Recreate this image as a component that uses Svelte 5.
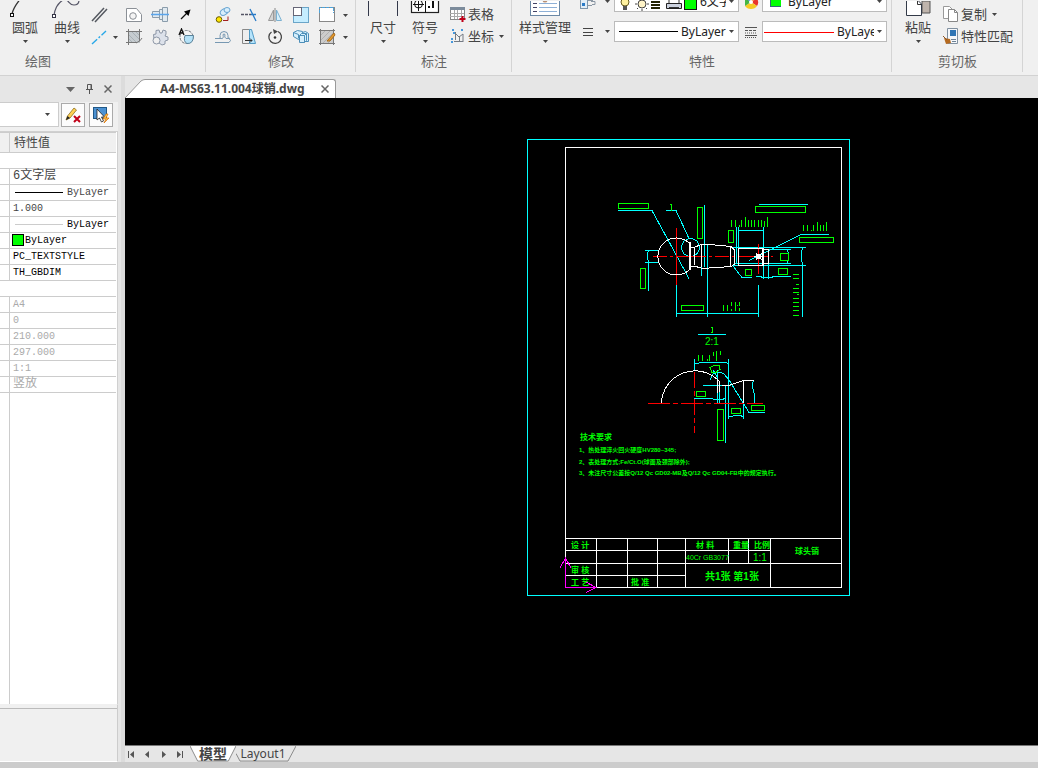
<script lang="ts">
    type Row = { value: string; kind?: 'blank' | 'line' | 'hairline' | 'color' | 'cjk'; tone?: 'strong' | 'muted' };

    const rows: Row[] = [
        { value: '', kind: 'blank' },
        { value: '6文字层', kind: 'cjk' },
        { value: 'ByLayer', kind: 'line' },
        { value: '1.000' },
        { value: 'ByLayer', kind: 'hairline', tone: 'strong' },
        { value: 'ByLayer', kind: 'color', tone: 'strong' },
        { value: 'PC_TEXTSTYLE', tone: 'strong' },
        { value: 'TH_GBDIM', tone: 'strong' },
        { value: '', kind: 'blank' },
        { value: 'A4', tone: 'muted' },
        { value: '0', tone: 'muted' },
        { value: '210.000', tone: 'muted' },
        { value: '297.000', tone: 'muted' },
        { value: '1:1', tone: 'muted' },
        { value: '竖放', kind: 'cjk', tone: 'muted' }
    ];

    // x, y, width, height of the dimension text frames
    const textBoxes = [
        [618, 203, 30, 5], [697, 207, 5, 31], [755, 206, 50, 6], [799, 237, 34, 5],
        [728, 230, 5, 12], [780, 253, 8, 7], [778, 268, 9, 6], [745, 269, 6, 6],
        [640, 268, 5, 20], [681, 305, 22, 5], [696, 391, 9, 5], [717, 409, 6, 31],
        [731, 408, 9, 5], [751, 405, 13, 5]
    ];

    // x, top, bottom
    const ticks = [
        [731, 220, 227], [735, 220, 227], [739, 225, 227], [741, 220, 227], [745, 217, 227],
        [748, 220, 227], [751, 220, 227], [754, 220, 227], [758, 220, 227], [761, 220, 227],
        [764, 221, 227], [767, 217, 227],
        [803, 225, 231], [807, 225, 231], [811, 230, 231], [813, 225, 231], [817, 222, 231],
        [820, 225, 231], [823, 225, 231], [826, 222, 231],
        [723, 305, 311], [727, 305, 311], [731, 302, 306], [731, 309, 311], [735, 302, 311],
        [737, 305, 306], [739, 302, 306], [739, 308, 311],
        [698, 355, 361], [702, 355, 361], [707, 359, 361], [709, 355, 361], [713, 352, 356],
        [716, 351, 361], [720, 351, 355]
    ];

    // y, left
    const sideTicks = [
        [274, 793], [278, 793], [284, 796], [288, 793], [292, 793], [294, 797],
        [298, 793], [302, 793], [306, 793], [310, 793], [315, 793]
    ];

    const notes = [
        { x: 579, y: 452, text: '1、热处理淬火回火硬度HV280~345;' },
        { x: 579, y: 464, text: '2、表处理方式;Fe/Ct.O(球面及颈部除外);' },
        { x: 579, y: 475, text: '3、未注尺寸公差按Q/12 Qc GD02-MB及Q/12 Qc GD04-FB中的规定执行。' }
    ];

    const titleBlock = [
        { x: 571, y: 548, text: '设 计' },
        { x: 571, y: 573, text: '审 核' },
        { x: 571, y: 585, text: '工 艺' },
        { x: 631, y: 585, text: '批 准' },
        { x: 696, y: 548, text: '材 料' },
        { x: 733, y: 548, text: '重量' },
        { x: 754, y: 548, text: '比例' }
    ];
</script>

{#snippet caret()}
    <svg class="caret" width="5" height="3" viewBox="0 0 5 3"><path d="M0 0h5L2.5 3z" fill="#444" /></svg>
{/snippet}

<div class="app">
    <div class="ribbon">
        <section class="group draw">
            <div class="body">
                <button class="big">
                    <svg width="36" height="18" viewBox="0 0 36 18">
                        <path d="M5 13C6 8 9 3 15 -4" fill="none" stroke="#333" stroke-width="1.3" />
                        <rect x="3.5" y="12.5" width="3" height="3" fill="#fff" stroke="#111" />
                    </svg>
                    <span>圆弧</span>{@render caret()}
                </button>
                <button class="big">
                    <svg width="36" height="18" viewBox="0 0 36 18">
                        <path d="M5 14C6 8 9 2 14 -1C20 -3 19 4 25 4C28 4 30 2 30 -1" fill="none" stroke="#556" stroke-width="1.2" />
                        <rect x="3.5" y="13.5" width="3" height="3" fill="#fff" stroke="#334" />
                    </svg>
                    <span>曲线</span>{@render caret()}
                </button>
                <div class="tools">
                    <button aria-label="多线"><svg viewBox="0 0 18 18"><path d="M2 15L14 2M5 16L17 3" stroke="#555960" stroke-width="1.5" /></svg></button>
                    <span></span>
                    <button aria-label="面域"><svg viewBox="0 0 18 18"><path d="M1.500 2.500h10l5 6v7h-15z" fill="#fff" stroke="#8b9096" /><circle cx="8" cy="10" r="3.3" fill="#f4f4f4" stroke="#8b9096" /></svg></button>
                    <button aria-label="轴"><svg viewBox="0 0 18 18"><path d="M1.500 5.500h7v-2h3v-2h5v14h-5v-2h-3v-2h-7z" fill="#dfe9f0" stroke="#8a9cab" /><path d="M8.500 5v8M11.500 3v11" stroke="#8a9cab" /><path d="M0 8.500h18" stroke="#5aa5ec" stroke-width="1.500" /></svg></button>
                    <button aria-label="箭头"><svg viewBox="0 0 18 18"><path d="M4 13L10 7" stroke="#111" stroke-width="1.200" /><path d="M13.500 3.500L11.500 10L7 5.500z" fill="#000" /></svg></button>
                    <button aria-label="中心线"><svg viewBox="0 0 18 18"><path d="M2 16L16 3" stroke="#28a8e8" stroke-width="1.400" stroke-dasharray="7 2 2 2" /></svg></button>
                    <button aria-label="更多线" class="drop">{@render caret()}</button>
                    <button aria-label="填充"><svg viewBox="0 0 18 18"><rect x="3" y="3" width="12" height="12" fill="#c6ccd0" /><path d="M3 6l9 9M3 10l5 5M6 3l9 9M10 3l5 5" stroke="#a9b1b6" /><path d="M3.500 1v16M1 3.500h16M14.500 1v12M1 14.500h11" stroke="#777" fill="none" /><path d="M11 15q5-2 6-5" stroke="#777" fill="none" /></svg></button>
                    <button aria-label="零件"><svg viewBox="0 0 18 18"><path d="M2.500 6.500L5 6V2.500L8 2l1 3h2l1-3 3 1v3l-1 2 3 1v3l-3 1v3l-3 1-3-2-5-4z" fill="#dce1ea" stroke="#8d97a7" /><circle cx="5.500" cy="12.500" r="3.500" fill="#f0f0f0" stroke="#8d97a7" /></svg></button>
                    <button aria-label="局部放大"><svg viewBox="0 0 18 18"><circle cx="9.500" cy="9" r="6.500" fill="#f5f5f5" stroke="#70767c" stroke-dasharray="3 1" /><path d="M8 7.500h8.500q0 8.500-6.500 8-4-2-2-8z" fill="#b5e2f8" stroke="#5a8299" /><path d="M2 7L4.500 1L7 7M3 5h3" fill="none" stroke="#111" stroke-width="1.300" /></svg></button>
                </div>
            </div>
            <h2>绘图</h2>
        </section>

        <section class="group modify">
            <div class="body">
                <div class="tools">
                    <button aria-label="复制对象"><svg viewBox="0 0 18 18"><ellipse cx="10" cy="6" rx="4" ry="3" fill="#d9effc" stroke="#68a5d2" transform="rotate(-35 10 6)" /><ellipse cx="13" cy="4" rx="3" ry="2.500" fill="#d9effc" stroke="#68a5d2" /><circle cx="5" cy="13.500" r="2.800" fill="#ffe600" stroke="#6b5c00" /><path d="M9 14.500h5v-4" fill="none" stroke="#a22020" /></svg></button>
                    <button aria-label="修剪"><svg viewBox="0 0 18 18"><path d="M1 8.500h3M5 8.500h3M9 8.500h2" stroke="#556" stroke-width="1.500" /><path d="M10 3L16 15M11 8.500h5" stroke="#2a7cc8" stroke-width="1.300" /></svg></button>
                    <button aria-label="镜像"><svg viewBox="0 0 18 18"><path d="M7.500 4v10.500h-5z" fill="#d5d5d5" stroke="#999" /><path d="M10.500 4v10.500h5z" fill="#d5effc" stroke="#7bb0d0" /><path d="M9 2v14" stroke="#888" /></svg></button>
                    <button aria-label="缩放"><svg viewBox="0 0 18 18"><rect x="1.500" y="1.500" width="15" height="15" fill="#c5edff" stroke="#6ba5c8" /><rect x="1.500" y="1.500" width="8" height="8" fill="#fff" stroke="#667" /></svg></button>
                    <button aria-label="拉伸"><svg viewBox="0 0 18 18"><rect x="1.500" y="1.500" width="15" height="14" fill="#fff" stroke="#888" /><path d="M1.500 7V1.500h14V7" fill="none" stroke="#4ba3dc" stroke-dasharray="3 1" /></svg></button>
                    <button aria-label="更多" class="drop">{@render caret()}</button>
                    <button aria-label="偏移"><svg viewBox="0 0 18 18"><path d="M1 10.500h4q2 0 1-3 0-4 4-4t4 4q-1 3 2 3M1 14.500h14q3-2 0-4h-3q-2-1-1-4-1-1-2 0 1 5-2 4H3" fill="none" stroke="#7798b2" /></svg></button>
                    <button aria-label="拉长"><svg viewBox="0 0 18 18"><path d="M2.500 1.500h7v14h-7z" fill="#eee" stroke="#888" /><path d="M9.500 1.500h2l4 14h-6z" fill="#b6e4fc" stroke="#529bc5" /><path d="M5 12.500h7m-2-2l2 2-2 2" stroke="#333" fill="none" /></svg></button>
                    <button aria-label="旋转"><svg viewBox="0 0 18 18"><path d="M5.500 4A6.300 6.300 0 1 0 12 3.500" fill="none" stroke="#444" stroke-width="1.300" /><path d="M7 1l5 2.500L8 6z" fill="#444" /><circle cx="9" cy="9.500" r="1.300" fill="#333" /></svg></button>
                    <button aria-label="阵列"><svg viewBox="0 0 18 18"><g fill="#d6effc" stroke="#4d8fb9"><path d="M1.500 4.500l4-2 5 1v6l-4 2-5-3z" /><path d="M10.500 4.500l3-1 3 2v8h-4z" /><path d="M7.500 7.500l2-2h5v7l-2 2h-5z" /><path d="M7.500 7.500h5v7M12.500 7.500l2-2M1.500 4.500l5 2v4" fill="none" /></g></svg></button>
                    <button aria-label="编辑填充"><svg viewBox="0 0 18 18"><rect x="3" y="3" width="12" height="12" fill="#ccc" /><path d="M3 7l4-4M3 12l9-9M5 15L15 5M10 15l5-5" stroke="#b0b0b0" /><path d="M2.500 1v16M1 2.500h16M15.500 1v16M1 15.500h16" stroke="#777" /><path d="M9 13L16 5l1 2-5 6z" fill="#e79b2d" stroke="#a76b1b" /></svg></button>
                    <button aria-label="更多编辑" class="drop">{@render caret()}</button>
                </div>
            </div>
            <h2>修改</h2>
        </section>

        <section class="group dims">
            <div class="body">
                <button class="big">
                    <svg width="36" height="18" viewBox="0 0 36 18"><path d="M3.500 0v15M32.500 0v15" stroke="#33384a" /></svg>
                    <span>尺寸</span>{@render caret()}
                </button>
                <button class="big">
                    <svg width="36" height="18" viewBox="0 0 36 18">
                        <rect x="4.500" y="-5.500" width="27" height="17" fill="#fff" stroke="#222" stroke-width="1.200" />
                        <path d="M18.500 0v12M11.500 0v10M6 3.500h11" stroke="#111" /><circle cx="11.500" cy="3" r="4" fill="none" stroke="#111" />
                        <path d="M21 5h2v2h-2zM25 0h2v7h-2z" fill="#111" />
                    </svg>
                    <span>符号</span>{@render caret()}
                </button>
                <div class="stack">
                    <button><svg viewBox="0 0 18 18"><rect x="1.500" y="2.500" width="14" height="12" fill="#fff" stroke="#888" /><path d="M1 2h15v3H1z" fill="#7c8b9b" /><path d="M1 8.500h14M1 11.500h14M5.500 5v9M8.500 5v9M12.500 5v9" stroke="#aaa" /><path d="M13.500 11v6M10.500 14h6" stroke="#c00018" stroke-width="2" /></svg><span>表格</span></button>
                    <button><svg viewBox="0 0 18 18"><path d="M6.500 5v8M5 14.500h9M7 7l3 3 4-3v8M10.500 9v5" fill="none" stroke="#747b84" /><path d="M3 3h3M12 3h3M2 12h2M2 15h2M4 6h2" stroke="#4798dc" stroke-width="2" stroke-dasharray="2 1" /></svg><span>坐标</span>{@render caret()}</button>
                </div>
            </div>
            <h2>标注</h2>
        </section>

        <section class="group props">
            <div class="body">
                <button class="big wide">
                    <svg width="36" height="18" viewBox="0 0 36 18">
                        <rect x="3.500" y="-4.500" width="29" height="19" fill="#fff" stroke="#6b88a5" />
                        <path d="M6 2.500h4M6 6.500h4M6 10.500h4" stroke="#446" /><path d="M12 2.500h18M12 6.500h18M12 10.500h18" stroke="#8eb0d6" /><circle cx="18" cy="-1" r="2.500" fill="#b98f72" />
                    </svg>
                    <span>样式管理</span>{@render caret()}
                </button>
                <div class="prop-grid">
                    <button class="pick" aria-label="图层"><svg viewBox="0 0 18 18"><rect x="1.500" y="3.500" width="7" height="12" fill="#e0edf8" stroke="#7c95ac" /><path d="M3 10h3v3H3z" fill="#287ac8" /><path d="M9 12.500h4M12 8.500h4v3h-3M9 7.500h5" fill="none" stroke="#8b97a4" /></svg>{@render caret()}</button>
                    <div class="combo">
                        <svg width="82" height="19" viewBox="0 0 82 19">
                            <circle cx="10" cy="10" r="4" fill="#fff2a0" stroke="#665c20" /><path d="M8 14h4v4H8z" fill="#555" />
                            <circle cx="27" cy="12" r="4" fill="#fff4c8" stroke="#444" /><path d="M27 5v2M27 17v2M20 12h2M32 12h2M22 7l1 1M31 7l1 1M22 17l1-1M31 16l1 1" stroke="#444" />
                            <path d="M36 10h9M36 13h9M36 16h9" stroke="#222200" stroke-width="2" />
                            <path d="M51.500 11.500h15v5h-15z" fill="#ccd2df" stroke="#222" /><path d="M54 11V6h10v5M54 15.500h10" stroke="#333" fill="#fff" />
                            <rect x="69.500" y="5.500" width="12" height="12" fill="#0f0" stroke="#111" />
                        </svg>
                        <select aria-label="当前图层"><option>6文字层</option></select>{@render caret()}
                    </div>
                    <span class="mark"><svg viewBox="0 0 18 18" width="18" height="18"><path d="M9 9V2a7 7 0 0 1 6 3.500z" fill="#ff8a25" /><path d="M9 9l6-3.500A7 7 0 0 1 15 13z" fill="#e9352b" /><path d="M9 9l6 4a7 7 0 0 1-6 3z" fill="#f5cb24" /><path d="M9 9v7a7 7 0 0 1-6-3z" fill="#f5cb24" /><path d="M9 9l-6 4V5z" fill="#44b545" /><path d="M9 9L3 5.500A7 7 0 0 1 9 2z" fill="#397bd8" /><circle cx="9" cy="9" r="2" fill="#fff" /></svg></span>
                    <div class="combo">
                        <svg width="18" height="19" viewBox="0 0 18 19"><rect x="7.500" y="3.500" width="11" height="11" fill="#0f0" stroke="#367" /></svg>
                        <select class="spaced" aria-label="颜色"><option>ByLayer</option></select>{@render caret()}
                    </div>
                    <button class="pick" aria-label="线宽"><svg viewBox="0 0 18 18"><path d="M4 5.500h10M4 9.500h10M4 12.500h10" stroke="#444" /></svg>{@render caret()}</button>
                    <div class="combo">
                        <svg width="63" height="19" viewBox="0 0 63 19"><path d="M4 9.500h59" stroke="#000" /></svg>
                        <select aria-label="线宽值"><option>ByLayer</option></select>{@render caret()}
                    </div>
                    <span class="mark"><svg viewBox="0 0 18 18" width="18" height="18"><path d="M3 4.500h12M3 12.500h12" stroke="#555" /><path d="M3 7.500h12" stroke="#555" stroke-dasharray="3 1" /><path d="M3 10h12M3 14.500h12" stroke="#555" stroke-dasharray="1 1" /></svg></span>
                    <div class="combo">
                        <svg width="71" height="19" viewBox="0 0 71 19"><path d="M1 10.500h70" stroke="#f00" /></svg>
                        <select aria-label="线型"><option>ByLayer</option></select>{@render caret()}
                    </div>
                </div>
            </div>
            <h2>特性</h2>
        </section>

        <section class="group clip">
            <div class="body">
                <button class="big">
                    <svg width="36" height="18" viewBox="0 0 36 18"><path d="M22 0h8v12h-8z" fill="#bfb4ac" stroke="#555" /><path d="M6.500 -2v16.500h15V3l-4-4" fill="#fff" stroke="#333a48" /><path d="M17.500 0v3.500h4" fill="none" stroke="#333" /></svg>
                    <span>粘贴</span>{@render caret()}
                </button>
                <div class="stack">
                    <button><svg viewBox="0 0 18 18"><path d="M1.500 1.500h6l3 3v9h-9z" fill="#fff" stroke="#999" /><path d="M6.500 4.500h6l3 3v9h-9z" fill="#fff" stroke="#888" /><path d="M12.500 4.500v3h3" fill="none" stroke="#888" /></svg><span>复制</span>{@render caret()}</button>
                    <button><svg viewBox="0 0 18 18"><path d="M5.500 1.500h10v15h-10z" fill="#f5f7fa" stroke="#8090a0" /><path d="M8 3h6v6H8z" fill="#2f75b5" /><path d="M9 12.500h5M10 14.500h4" stroke="#6d8295" /><path d="M2 11l6 1 1 4-5 1z" fill="#b56a20" /><path d="M1 9l4 4" stroke="#8b5527" /></svg><span>特性匹配</span></button>
                </div>
            </div>
            <h2>剪切板</h2>
        </section>
    </div>

    <div class="workspace">
        <aside class="panel">
            <div class="panel-head">
                <button aria-label="菜单"><svg width="9" height="5" viewBox="0 0 9 5"><path d="M0 0h9L4.500 5z" fill="#666" /></svg></button>
                <button aria-label="固定"><svg width="9" height="10" viewBox="0 0 9 10"><path d="M2.500 5.500v-5h4v5M1 5.500h7M4.500 6v4" fill="none" stroke="#555" /><path d="M6 1v4" stroke="#555" /></svg></button>
                <button aria-label="关闭"><svg width="8" height="8" viewBox="0 0 8 8"><path d="M0.500 0.500l7 7M7.500 0.500l-7 7" stroke="#666" stroke-width="1.500" /></svg></button>
            </div>
            <div class="panel-tools">
                <div class="object"><select aria-label="对象"><option></option></select>{@render caret()}</div>
                <button aria-label="清除选择"><svg width="18" height="18" viewBox="0 0 18 18"><path d="M2 14L3.500 10L10 2L12.500 4L6 12z" fill="#ffd052" stroke="#8a6d20" stroke-width="0.800" /><path d="M2 14l1.500-4 2.500 2z" fill="#222" /><path d="M10 10l6 6M16 10l-6 6" stroke="#c00018" stroke-width="2" /></svg></button>
                <button aria-label="快速选择"><svg width="18" height="18" viewBox="0 0 18 18"><rect x="1.500" y="1.500" width="13" height="11" fill="#4b91d2" stroke="#205887" /><path d="M5 3v11l2.500-2 2 4 2-1-2-4h3z" fill="#fff" stroke="#222" stroke-width="0.800" /><path d="M14 8l-3 5h3l-2 4 5-5h-3l2-4z" fill="#ffc34d" stroke="#d56d00" stroke-width="0.700" /></svg></button>
            </div>
            <div class="sheet">
                <table>
                    <thead><tr><th class="name"></th><th>特性值</th></tr></thead>
                    <tbody>
                        {#each rows as row}
                            {#if row.kind === 'blank'}
                                <tr><td colspan="2"></td></tr>
                            {:else}
                                <tr>
                                    <td class="name"></td>
                                    <td class="value {row.kind ?? ''} {row.tone ?? ''}">
                                        {#if row.kind === 'line' || row.kind === 'hairline'}
                                            <i class="stroke"></i>
                                        {:else if row.kind === 'color'}
                                            <i class="swatch"></i>
                                        {/if}{row.value}
                                    </td>
                                </tr>
                            {/if}
                        {/each}
                    </tbody>
                </table>
                <div class="rest"></div>
            </div>
            <div class="hint"></div>
        </aside>

        <main class="document">
            <div class="doc-tabs">
                <svg class="slant" width="20" height="19" viewBox="0 0 20 19"><path d="M0 19L16 2Q18 0 20 0V19z" fill="#fff" /><path d="M0 19L16 2Q18 0.500 20 0.500" fill="none" stroke="#999" /></svg>
                <div class="doc-tab">
                    <button class="title">A4-MS63.11.004球销.dwg</button>
                    <button aria-label="关闭文档"><svg width="8" height="8" viewBox="0 0 8 8"><path d="M0.500 0.500l7 7M7.500 0.500l-7 7" stroke="#666" stroke-width="1.500" /></svg></button>
                </div>
            </div>

            <div class="canvas">
                <svg viewBox="125 98 913 647" preserveAspectRatio="xMinYMin meet" shape-rendering="crispEdges">
                    <!-- sheet frame and title block -->
                    <rect class="cyan" x="527.5" y="139.5" width="322" height="456" />
                    <g class="white">
                        <rect x="565.5" y="147.5" width="276" height="440" />
                        <path d="M565 538.5h276M565 550.5h205M565 563.5h276M565 575.5h120" />
                        <path d="M596.5 538v49M627.5 538v49M657.5 538v49M685.5 538v49M728.5 538v25M748.5 538v25M770.5 538v49" />
                    </g>

                    <!-- ball stud, main view -->
                    <g class="cyan">
                        <path d="M618 210.5h34l37 68M666 210.5h10l13 28" />
                        <circle cx="690.5" cy="247.5" r="9" />
                        <path d="M704.5 205v62M701.5 245v31M707.5 244v73" />
                        <path d="M645 250.5h14M645 262.5h14M648.5 250q-2 6 0 12v29" />
                        <path d="M736.5 227v36M738.5 227v21M763.5 227v52M768.5 249v30M738 230.5h25" />
                        <path d="M733 247.5h73M733 265.5h73M735 263.5h56M768 249.5h23" />
                        <path d="M787.5 250q2 6 0 13M802.5 247q-2 9 0 18v52" />
                        <path d="M749 260.5l52-26h28M759 204.5h49" />
                        <path d="M733 266l9 11.5h10M756 276.5h4l3 1h8l3-1h17" />
                        <path d="M676.5 285v32M758.5 285v32M676 313.5h82" />
                    </g>
                    <g class="red">
                        <path d="M653 256.5h120" stroke-dasharray="14 3 3 3 30 3 3 3" />
                        <path d="M676.5 228v57M758.5 244v30" />
                    </g>
                    <g class="white">
                        <path d="M690 244A18.5 18.5 0 1 0 690 269" />
                        <path d="M690 242v28" stroke-width="2" />
                        <path d="M691 247.5h3l7-3h8l22 2 3 3v15l-3 2-22 1.5h-8l-7-2h-3M694.5 247v18M701.5 244v23M730.5 246v20" />
                        <path d="M738.5 248h25v17h-25zM763.5 249.500h5v14h-5" />
                        <path d="M762.5 248v17M754 256.500h10M756 253l6 7M762 253l-6 7" />
                        <circle cx="758.5" cy="256.5" r="2.5" />
                    </g>

                    <!-- detail view at 2:1 -->
                    <g class="cyan">
                        <path d="M698 334.5h28" />
                        <path d="M694.5 359v11M728.5 359v60M694 363.5h4l2-1h26l2 1" />
                        <path d="M703 385.5h28M725.5 385v58M694 398.5h18l2 1h8l3-1" />
                        <path d="M710 380l3-6q6-3 11 0l5 6 20 32.5h16M713 370l5 8" />
                        <path d="M717.5 370v33M719.5 392v11M743.5 403v16M753.5 380q-2 7 1 14v9M728 416.5h4l2-1h6l3 1" />
                    </g>
                    <g class="red">
                        <path d="M648 403.5h115" stroke-dasharray="22 3 5 3" />
                        <path d="M694.5 372v61" stroke-dasharray="16 3 5 3" />
                    </g>
                    <g class="white">
                        <path d="M661.5 403A33.5 33.5 0 0 1 719 381M717.5 379v14M719.5 381v11" />
                        <path d="M722 385.5h7l14-5h11M743.5 380v23" />
                    </g>

                    <g class="green">
                        {#each textBoxes as [x, y, w, h]}
                            <rect x={x + 0.5} y={y + 0.5} width={w} height={h} />
                        {/each}
                        {#each ticks as [x, top, bottom]}
                            <path d="M{x + 0.5} {top}V{bottom}" />
                        {/each}
                        {#each sideTicks as [y, left]}
                            <path d="M{left} {y + 0.5}H799" />
                        {/each}
                        <path d="M710 367.5l4-2 5 0 1 4-4 3h-4z" />
                        <path d="M670 204.5h1.5v6M711 327.5h1.5v5h-2" />
                    </g>

                    <g class="label">
                        <text x="705" y="345" class="mid">2:1</text>
                        <text x="580" y="440" class="bold">技术要求</text>
                        {#each notes as note}
                            <text x={note.x} y={note.y} class="note">{note.text}</text>
                        {/each}
                        {#each titleBlock as cell}
                            <text x={cell.x} y={cell.y} class="bold">{cell.text}</text>
                        {/each}
                        <text x="686" y="560" class="code">40Cr GB3077</text>
                        <text x="753" y="561" class="mid">1:1</text>
                        <text x="705" y="580" class="mid bolder">共1张 第1张</text>
                        <text x="795" y="554" class="bold">球头销</text>
                    </g>

                    <path d="M565.5 558v29.5h31M560 568l5.5 -10l5.5 10M586 582l10 5.5l-10 5" fill="none" stroke="#f0f" />
                </svg>
            </div>

            <div class="layout-bar">
                <div class="nav">
                    <button aria-label="第一个"><svg width="7" height="7" viewBox="0 0 7 7"><path d="M0 0h1v7H0zM6 0v7L2 3.500z" fill="#555" /></svg></button>
                    <button aria-label="上一个"><svg width="7" height="7" viewBox="0 0 7 7"><path d="M5 0v7L1 3.500z" fill="#555" /></svg></button>
                    <button aria-label="下一个"><svg width="7" height="7" viewBox="0 0 7 7"><path d="M2 0v7l4-3.500z" fill="#555" /></svg></button>
                    <button aria-label="最后一个"><svg width="7" height="7" viewBox="0 0 7 7"><path d="M6 0h1v7H6zM1 0v7l4-3.500z" fill="#555" /></svg></button>
                </div>
                <button class="layout active">
                    <svg viewBox="0 0 48 17" preserveAspectRatio="none"><path d="M0 0L8 16H40L48 0" fill="#fff" stroke="#888" /></svg>
                    <span>模型</span>
                </button>
                <button class="layout">
                    <svg viewBox="0 0 60 17" preserveAspectRatio="none"><path d="M0 8L4 16H52L60 0" fill="none" stroke="#888" /></svg>
                    <span>Layout1</span>
                </button>
            </div>
        </main>
    </div>
    <div class="status"></div>
</div>

<style>
    :global(body) {
        margin: 0;
        overflow: hidden;
    }

    .app {
        display: flex;
        flex-direction: column;
        height: 100vh;
        background: #e6e6e6;
        color: #444;
        font-family: 'Noto Sans', 'Noto Sans CJK SC', sans-serif;
        font-size: 12px;
        line-height: 16px;
    }

    .app * {
        box-sizing: border-box;
    }

    button {
        display: flex;
        align-items: center;
        justify-content: center;
        padding: 0;
        border: 0;
        background: none;
        color: inherit;
        font: inherit;
    }

    select {
        flex: 1;
        min-width: 0;
        padding: 0;
        border: 0;
        outline: 0;
        appearance: none;
        background: none;
        color: #222;
        font: inherit;
    }

    .caret {
        flex: none;
    }

    /* Ribbon */
    .ribbon {
        display: flex;
        flex: none;
        background: #f0f0f0;
        border-bottom: 1px solid #d2d2d2;
    }

    .group {
        flex: none;
        padding-bottom: 3px;
        position: relative;
        font-family: 'Noto Sans CJK SC', sans-serif;
        font-size: 13px;
    }

    .group::after {
        content: '';
        position: absolute;
        right: 0;
        top: 0;
        bottom: 3px;
        border-right: 1px solid #d4d4d4;
    }

    .draw { width: 206px; }
    .modify { width: 150px; }
    .dims { width: 156px; }
    .props { width: 380px; }
    .clip { width: 131px; }

    .group h2 {
        margin: 0;
        height: 22px;
        color: #666;
        font-size: 13px;
        font-weight: 400;
        line-height: 22px;
        text-align: center;
    }

    .draw h2 {
        padding-right: 130px;
    }

    .body {
        display: flex;
        align-items: flex-end;
        height: 50px;
        overflow: hidden;
    }

    .draw .body { padding-left: 4px; }
    .dims .body { padding-left: 6px; }
    .props .body { padding-left: 3px; }
    .clip .body { padding-left: 5px; }

    .big {
        flex-direction: column;
        width: 42px;
        padding-bottom: 7px;
    }

    .big span {
        margin-bottom: 5px;
        white-space: nowrap;
    }

    .wide {
        width: 60px;
    }

    .tools {
        display: grid;
        grid-auto-rows: 22px;
        padding-bottom: 2px;
    }

    .draw .tools {
        grid-template-columns: 22px 11px 26px 26px 26px;
    }

    .modify .tools {
        grid-template-columns: repeat(5, 26px) 10px;
        padding-left: 4px;
    }

    .tools svg:not(.caret),
    .stack svg:not(.caret),
    .pick svg:not(.caret) {
        flex: none;
        width: 18px;
        height: 18px;
    }

    .stack {
        padding: 0 0 3px 3px;
    }

    .clip .stack {
        padding-left: 3px;
    }

    .stack button {
        gap: 1px;
        height: 22px;
        white-space: nowrap;
    }

    .stack .caret {
        margin-left: 4px;
    }

    .prop-grid {
        display: grid;
        grid-template-columns: 39px 125px 23px 125px;
        grid-auto-rows: 21px;
        row-gap: 9px;
        padding-bottom: 8px;
    }

    .pick {
        gap: 8px;
    }

    .mark {
        display: flex;
        align-items: center;
        justify-content: center;
    }

    .combo {
        display: flex;
        align-items: center;
        gap: 3px;
        padding-right: 4px;
        overflow: hidden;
        border: 1px solid #bbb;
        background: #fff;
        font-family: 'Noto Sans', 'Noto Sans CJK SC', sans-serif;
        font-size: 12px;
    }

    .combo > svg {
        flex: none;
    }

    .spaced {
        padding-left: 4px;
    }

    /* Property panel */
    .workspace {
        display: flex;
        flex: 1;
        min-height: 0;
    }

    .panel {
        display: flex;
        flex: none;
        flex-direction: column;
        width: 125px;
        padding-right: 7px;
        box-shadow: inset -4px 0 #dcdcdc;
    }

    .panel-head {
        display: flex;
        align-items: center;
        justify-content: flex-end;
        gap: 10px;
        height: 26px;
        padding-right: 6px;
    }

    .panel-tools {
        display: flex;
        align-items: center;
        gap: 2px;
        height: 29px;
        padding-bottom: 4px;
        background: #f0f0f0;
    }

    .object {
        display: flex;
        align-items: center;
        width: 59px;
        height: 25px;
        padding-right: 8px;
        border: 1px solid #ccc;
        border-left: 0;
        background: #fff;
    }

    .panel-tools button {
        width: 24px;
        height: 24px;
        border: 1px solid #aaa;
        background: #fcfcfc;
    }

    .panel-tools button:last-child {
        margin-left: 2px;
    }

    .sheet {
        display: flex;
        flex: 1;
        flex-direction: column;
        padding-right: 1px;
        border: 1px solid #d0d0d0;
        border-left: 0;
        border-bottom: 0;
        background: #fff;
    }

    table {
        width: 100%;
        border-collapse: separate;
        border-spacing: 0;
        table-layout: fixed;
    }

    th {
        height: 21px;
        padding: 0 0 0 4px;
        border-top: 1px solid #ccc;
        border-bottom: 1px solid #ccc;
        background: #f0f0f0;
        font-weight: 400;
        text-align: left;
    }

    td {
        height: 16px;
        padding: 0;
        border-bottom: 1px solid #ccc;
        line-height: 15px;
        white-space: nowrap;
    }

    .name {
        width: 10px;
        padding: 0;
        border-right: 1px solid #ccc;
    }

    .value {
        padding-left: 3px;
        font-family: 'Liberation Mono', 'Noto Sans CJK SC', monospace;
        font-size: 10px;
    }

    .cjk {
        font-size: 12px;
    }

    .strong {
        color: #000;
    }

    .muted {
        color: #aaa;
    }

    .stroke {
        display: inline-block;
        width: 48px;
        margin: 0 4px 0 2px;
        border-top: 1px solid #000;
        vertical-align: middle;
    }

    .hairline .stroke {
        border-color: #ccc;
    }

    .color {
        padding-left: 2px;
    }

    .swatch {
        display: inline-block;
        width: 12px;
        height: 12px;
        margin-right: 1px;
        border: 1px solid #000;
        background: #0f0;
        vertical-align: middle;
    }

    .rest {
        flex: 1;
        margin-left: 9px;
        border-left: 1px solid #ccc;
    }

    .hint {
        height: 58px;
        border: 1px solid #ccc;
        border-left: 0;
        border-top-color: #f0f0f0;
        border-bottom-color: #fff;
        background: #f0f0f0;
        box-shadow: inset 0 3px #f0f0f0, inset 0 4px #bbb;
    }

    /* Document */
    .document {
        display: flex;
        flex: 1;
        flex-direction: column;
        min-width: 0;
    }

    .doc-tabs {
        display: flex;
        align-items: flex-end;
        height: 22px;
        flex: none;
    }

    .slant {
        flex: none;
    }

    .doc-tab {
        display: flex;
        gap: 16px;
        height: 19px;
        padding: 0 6px 0 15px;
        border: 1px solid #999;
        border-width: 1px 1px 0 0;
        border-radius: 0 3px 0 0;
        background: #fff;
    }

    .title {
        font-weight: 700;
        white-space: nowrap;
    }

    .canvas {
        flex: 1;
        min-height: 0;
        background: #000;
    }

    .canvas svg {
        display: block;
        width: 100%;
        height: 100%;
    }

    .white, .cyan, .red, .green {
        fill: none;
        stroke: #fff;
    }

    .cyan { stroke: #0ff; }
    .red { stroke: #f00; }
    .green { stroke: #0f0; }

    .label {
        fill: #0f0;
        font-family: 'Liberation Sans', 'Noto Sans CJK SC', sans-serif;
    }

    .note {
        font-size: 6px;
        font-weight: 700;
    }

    .code {
        font-size: 7px;
    }

    .bold {
        font-size: 8px;
        font-weight: 700;
    }

    .mid {
        font-size: 10px;
    }

    .bolder {
        font-weight: 700;
    }

    .layout-bar {
        display: flex;
        flex: none;
        height: 17px;
        border-top: 1px solid #777;
    }

    .nav {
        display: flex;
        align-items: center;
        gap: 9px;
        width: 65px;
        padding-left: 3px;
    }

    .layout {
        position: relative;
        width: 46px;
    }

    .layout:last-child {
        width: 60px;
        padding-right: 6px;
    }

    .layout svg {
        position: absolute;
        inset: 0;
        width: 100%;
        height: 100%;
    }

    .layout span {
        position: relative;
    }

    .active {
        font-size: 14px;
        font-weight: 700;
    }

    .status {
        flex: none;
        height: 6px;
        background: #ccc;
    }
</style>
